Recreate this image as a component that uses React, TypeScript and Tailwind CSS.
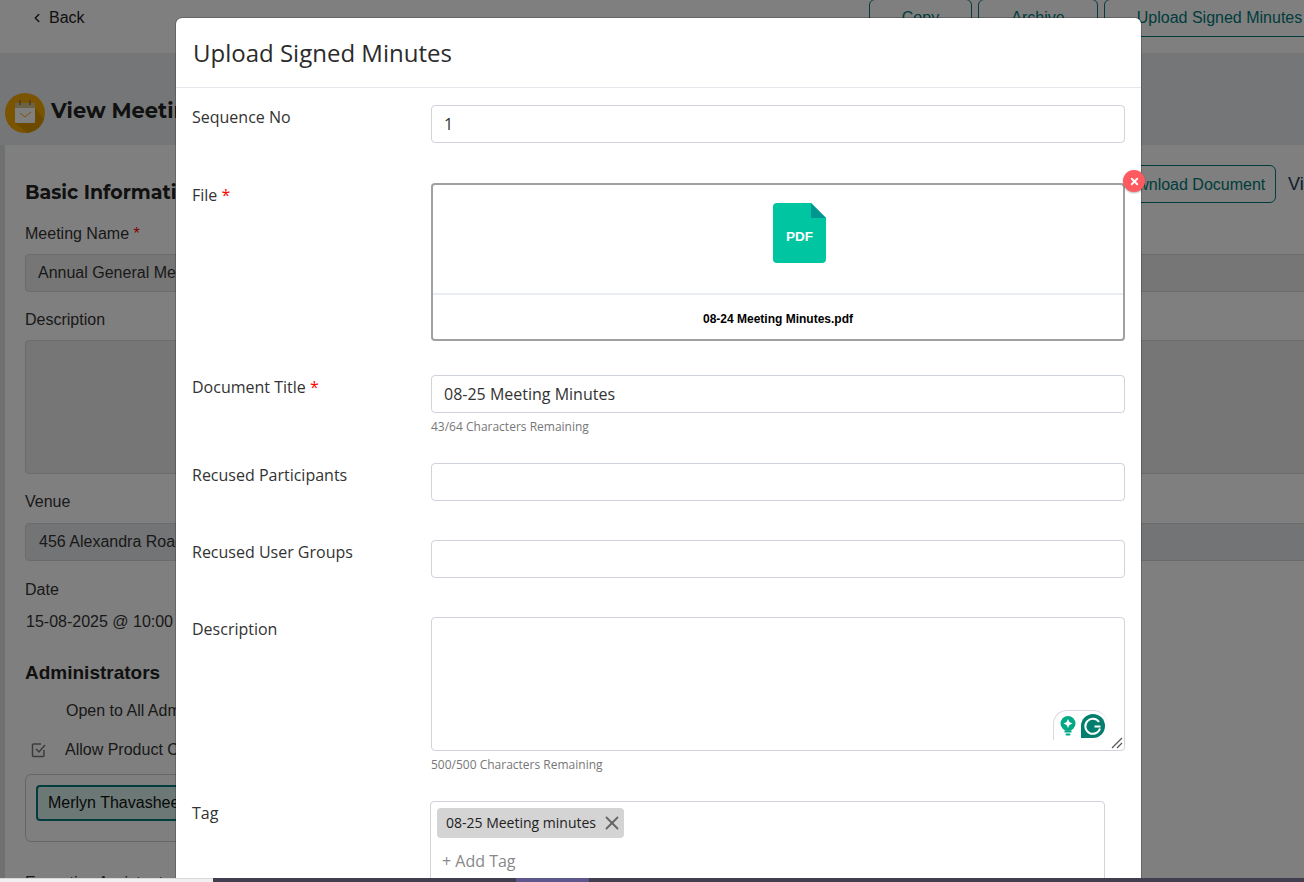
import { ChevronLeft, X } from 'lucide-react'

const sans = "font-['Open_Sans',sans-serif]"
const arial = "font-['Liberation_Sans',Arial,sans-serif]"

function Required() {
  return <span className="text-[#ff0000]"> *</span>
}

function BackgroundPage() {
  return (
    <div className={`${arial} h-full bg-[#ebedf0] text-[16px] text-[#333]`}>
      <div className="flex h-[53px] items-start justify-between bg-white">
        <div className="flex items-center pl-[30px] pt-[6px] text-[#222]">
          <ChevronLeft className="h-[14px] w-[14px]" strokeWidth={2.5} />
          <span className="ml-[5px]">Back</span>
        </div>
        <div className="mr-[-8px] mt-[-1px] flex gap-[6px] text-[#007a78]">
          <div className="flex h-[38px] w-[103px] items-center justify-center rounded-[6px] border border-[#007a78]">Copy</div>
          <div className="flex h-[38px] w-[120px] items-center justify-center rounded-[6px] border border-[#007a78]">Archive</div>
          <div className="flex h-[38px] w-[208px] items-center justify-center whitespace-nowrap rounded-[6px] border border-[#007a78] pl-[23px]">Upload Signed Minutes</div>
        </div>
      </div>
      <div className="flex h-[92px] items-center pl-[5px] pt-[24px]">
        <svg viewBox="0 0 40 40" className="mt-[4px] h-[40px] w-[40px]">
          <circle cx="20" cy="20" r="20" fill="#f5a800" />
          <path d="M30 15L39 26A20 20 0 0 1 22 40L10 30Z" fill="#d99500" />
          <rect x="10" y="10" width="20" height="20" rx="1" fill="#fff" />
          <rect x="10" y="10" width="20" height="5" fill="#d9c48a" />
          <path d="M15 7v5M25 7v5" stroke="#8a7a50" strokeWidth="1.5" />
          <path d="M15 20l5 4 6-5" stroke="#f5a800" strokeWidth="1" fill="none" />
        </svg>
        <span className="ml-[6px] font-['Montserrat','Open_Sans',sans-serif] text-[21px] font-bold text-[#222]">View Meeting</span>
      </div>
      <div className="bg-[#dfe0e2] pl-[5px]">
        <div className="h-[737px] bg-white px-[20px] pt-[34px]">
          <div className="flex items-start justify-between">
            <h2 className="font-['Montserrat','Open_Sans',sans-serif] text-[19px] font-bold text-[#222]">Basic Information</h2>
            <div className="mr-[-20px] mt-[-14px] flex items-center gap-[12px]">
              <div className="flex h-[38px] w-[170px] items-center justify-center rounded-[6px] border border-[#007a78] pt-[1px] text-[#007a78]">Download Document</div>
              <span className="w-[16px] overflow-hidden whitespace-nowrap text-[18px] text-[#1e3a50]">View</span>
            </div>
          </div>
          <div className="mt-[14px]">Meeting Name <span className="text-[#ff0000]">*</span></div>
          <div className="mt-[8px] flex h-[38px] w-[1300px] items-center rounded-[4px] border border-[#d6d6d6] bg-[#ededed] px-[12px]">Annual General Meeting</div>
          <div className="mt-[16px]">Description</div>
          <div className="mt-[8px] h-[134px] w-[1300px] rounded-[4px] border border-[#d6d6d6] bg-[#ededed]" />
          <div className="mt-[16px]">Venue</div>
          <div className="mt-[9px] flex h-[38px] w-[1300px] items-center rounded-[4px] border border-[#d6d6d6] bg-[#e7e9ec] px-[13px]">456 Alexandra Road</div>
          <div className="mt-[17px]">Date</div>
          <div className="mt-[8px] pl-[1px]">15-08-2025 @ 10:00</div>
          <h3 className="mt-[25px] text-[19px] font-bold text-[#222]">Administrators</h3>
          <div className="mt-[12px] pl-[41px]">Open to All Administrators</div>
          <div className="mt-[15px] flex items-center gap-[18px] pl-[6px]">
            <svg viewBox="0 0 16 16" className="h-[16px] w-[16px] text-[#777]" fill="none" stroke="currentColor" strokeWidth="1.5">
              <path d="M13 8v5.5a1 1 0 0 1-1 1H2.5a1 1 0 0 1-1-1V3a1 1 0 0 1 1-1H10" />
              <path d="M5 7l3 3 6-7" />
            </svg>
            <span>Allow Product Coordinators</span>
          </div>
          <div className="mt-[12px] h-[68px] w-[1100px] rounded-[6px] border border-[#ccc] px-[10px] pt-[10px]">
            <div className="flex h-[36px] w-[300px] items-center rounded-[4px] border-2 border-[#007a78] bg-[#d8f0ea] px-[10px] text-[#111]">Merlyn Thavasheela</div>
          </div>
          <div className="mt-[29px]">Executive Assistants</div>
        </div>
      </div>
    </div>
  )
}

function Field({ label, required, className, children }: { label: string; required?: boolean; className?: string; children: React.ReactNode }) {
  return (
    <div className={`flex ${className ?? ''}`}>
      <div className="w-[255px] shrink-0 pl-[16px] text-[16px] leading-[24px] text-[#333]">
        {label}
        {required && <Required />}
      </div>
      <div className="w-[694px]">{children}</div>
    </div>
  )
}

function TextBox({ value }: { value?: string }) {
  return (
    <div className="flex h-[38px] items-center rounded-[4px] border border-[#ced4da] px-[12px] text-[16px] text-[#333]">{value}</div>
  )
}

function Counter({ children }: { children: React.ReactNode }) {
  return <div className="mt-[6px] text-[12px] leading-[16px] text-[#777]">{children}</div>
}

function PdfIcon() {
  return (
    <svg viewBox="0 0 53 60" className="h-[60px] w-[53px]">
      <path d="M4 0H38L53 15V56a4 4 0 0 1-4 4H4a4 4 0 0 1-4-4V4a4 4 0 0 1 4-4Z" fill="#00c5a1" />
      <path d="M38 0L53 15H38Z" fill="#00958f" />
      <text x="26.5" y="37.5" textAnchor="middle" fill="#fff" fontSize="13.5" fontWeight="700" fontFamily="'Liberation Sans',Arial,sans-serif">PDF</text>
    </svg>
  )
}

function GrammarlyWidget() {
  return (
    <div className="absolute bottom-[10px] right-[16px] flex h-[30px] w-[55px] items-center justify-between rounded-tl-[14px] rounded-r-[15px] border border-b-0 border-r-0 border-[#d9d9e6] bg-white pl-[6px] pr-[3px]">
      <svg viewBox="0 0 16 20" className="h-[20px] w-[16px]">
        <circle cx="8" cy="7.5" r="7.5" fill="#00a884" />
        <path d="M8 3l1.4 3.1L12.5 7.5 9.4 8.9 8 12 6.6 8.9 3.500 7.5l3.100-1.400Z" fill="#fff" />
        <rect x="4.5" y="14.500" width="7" height="2" fill="#00a884" />
        <rect x="5.5" y="17.500" width="5" height="2" rx="1" fill="#00a884" />
      </svg>
      <svg viewBox="0 0 24 24" className="h-[24px] w-[24px]">
        <path d="M12 0a12 12 0 1 1 0 24H0V12A12 12 0 0 1 12 0Z" fill="#027e6f" />
        <path d="M18 8a7.5 7.5 0 1 0 1 6.5M19.5 12.5h-6" fill="none" stroke="#fff" strokeWidth="2" />
      </svg>
    </div>
  )
}

export default function App() {
  return (
    <div className="relative h-[882px] w-[1304px] overflow-hidden">
      <BackgroundPage />
      {/* backdrop */}
      <div className="absolute inset-0 bg-black/50" />
      <div className={`${sans} absolute left-[176px] top-[18px] h-[870px] w-[965px] rounded-t-[6px] bg-white shadow-[0_0_0_1px_rgba(0,0,0,0.2)]`}>
        <div className="flex h-[70px] items-center border-b border-[#e3e6ea] pl-[17px] text-[24px] text-[#2b2b2b]">Upload Signed Minutes</div>
        <div className="pt-[17px]">
          <Field label="Sequence No">
            <TextBox value="1" />
          </Field>
          <Field label="File" required className="mt-[40px]">
            <div className="relative h-[158px] rounded-[4px] border-2 border-[#a0a0a0]">
              <div className="flex h-[110px] items-start justify-center border-b-2 border-[#e9edf2] pl-[42px] pt-[18px]">
                <PdfIcon />
              </div>
              <div className={`${arial} flex h-[44px] items-center justify-center pt-[3px] text-[12px] font-bold text-black`}>08-24 Meeting Minutes.pdf</div>
              <div className="absolute right-[-22px] top-[-15px] flex h-[22px] w-[22px] items-center justify-center rounded-full bg-[#ff5a5f] shadow-[0_1px_2px_rgba(0,0,0,0.3)]">
                <X className="h-[11px] w-[11px] text-white" strokeWidth={4} />
              </div>
            </div>
          </Field>
          <Field label="Document Title" required className="mt-[34px]">
            <TextBox value="08-25 Meeting Minutes" />
            <Counter>43/64 Characters Remaining</Counter>
          </Field>
          <Field label="Recused Participants" className="mt-[28px]">
            <TextBox />
          </Field>
          <Field label="Recused User Groups" className="mt-[39px]">
            <TextBox />
          </Field>
          <Field label="Description" className="mt-[39px]">
            <div className="relative h-[134px] rounded-[4px] border border-[#ced4da]">
              <GrammarlyWidget />
              <svg viewBox="0 0 12 12" className="absolute bottom-[1px] right-[1px] h-[12px] w-[12px]" stroke="#555" strokeWidth="1.2">
                <path d="M1 11L11 1M6 11l5-5" />
              </svg>
            </div>
            <Counter>500/500 Characters Remaining</Counter>
          </Field>
          <Field label="Tag" className="mt-[28px]">
            <div className="ml-[-1px] h-[100px] w-[675px] rounded-[4px] border border-[#ced4da] px-[6px] pt-[6px]">
              <div className="flex h-[30px] w-[187px] items-center justify-between rounded-[4px] bg-[#d4d4d4] pb-[1px] pl-[9px] pr-[1px] text-[14px] text-[#222]">
                08-25 Meeting minutes
                <X className="h-[22px] w-[22px] text-[#666]" strokeWidth={2} />
              </div>
              <div className="mt-[11px] pl-[5px] text-[16px] leading-[24px] text-[#888]">+ Add Tag</div>
            </div>
          </Field>
        </div>
      </div>
      {/* taskbar peeking in at the bottom edge */}
      <div className="absolute inset-x-0 bottom-0 flex h-[4px] bg-[#423e50]">
        <div className="w-[213px] border-t border-[#d8d8d8] bg-[#f0f0f0]" />
        <div className="ml-[303px] w-[73px] bg-[#5d588c]" />
      </div>
    </div>
  )
}
